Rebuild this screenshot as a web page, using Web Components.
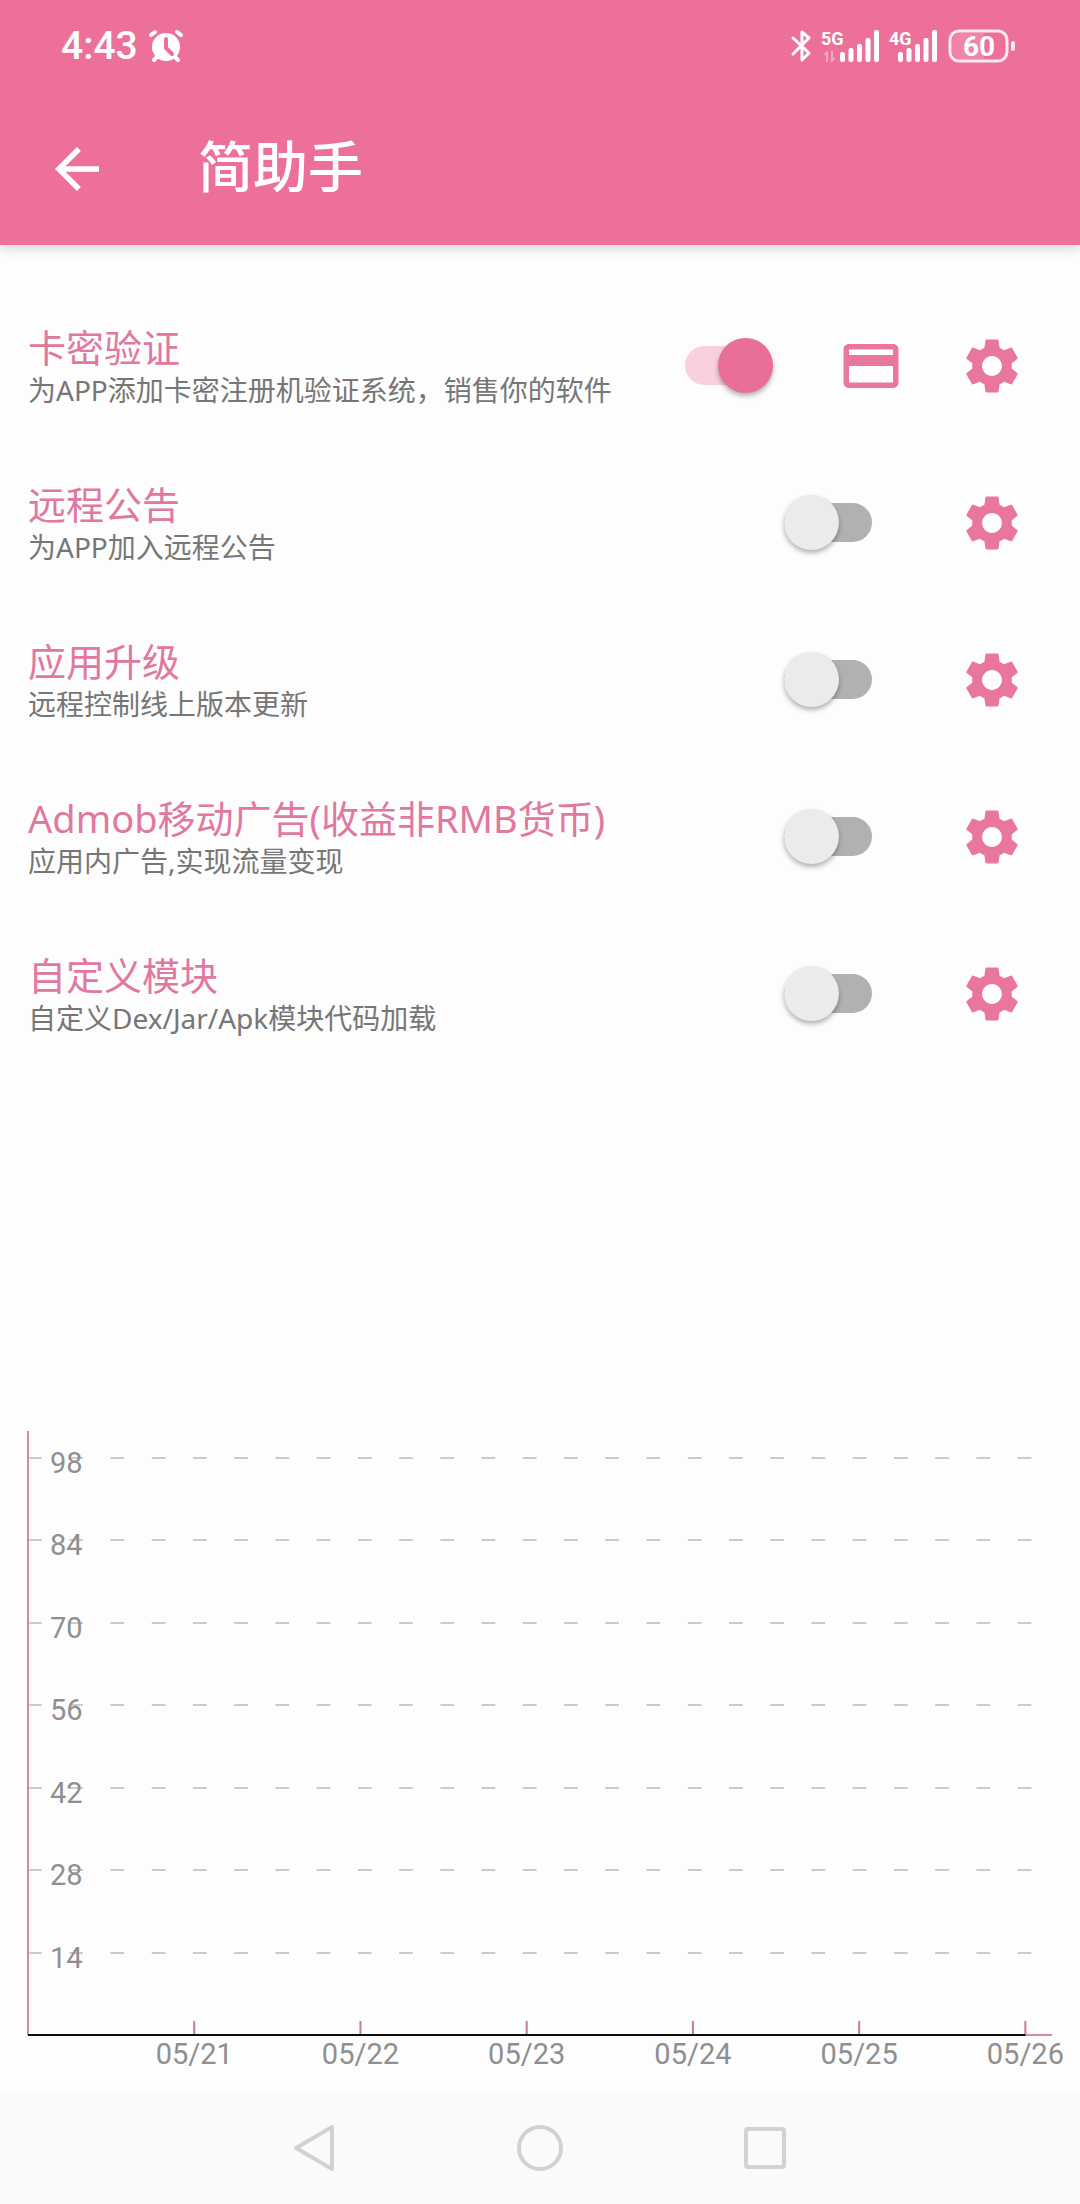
<!DOCTYPE html>
<html lang="zh-CN">
<head>
<meta charset="UTF-8">
<meta name="viewport" content="width=device-width, initial-scale=1">
<title>简助手</title>
<style>
    body {
        margin: 0;
        background-color: #fdfdfd;
        font-family: "Noto Sans", "Noto Sans CJK SC", sans-serif;
    }
</style>
</head>
<body>
<app-screen>
    <status-bar slot="header" time="4:43" battery="60"></status-bar>
    <app-bar slot="header">简助手</app-bar>

    <setting-row name="卡密验证" info="为APP添加卡密注册机验证系统，销售你的软件" checked>
        <icon-button class="card" icon="card" label="卡密"></icon-button>
    </setting-row>
    <setting-row name="远程公告" info="为APP加入远程公告"></setting-row>
    <setting-row name="应用升级" info="远程控制线上版本更新"></setting-row>
    <setting-row name="Admob移动广告(收益非RMB货币)" info="应用内广告,实现流量变现"></setting-row>
    <setting-row name="自定义模块" info="自定义Dex/Jar/Apk模块代码加载"></setting-row>

    <usage-chart slot="chart" values="98,84,70,56,42,28,14" days="05/21,05/22,05/23,05/24,05/25,05/26"></usage-chart>
    <nav-bar slot="footer"></nav-bar>
</app-screen>

<script>
const ICONS = {
    back: `<path d="M20 11H7.83l5.59-5.59L12 4l-8 8 8 8 1.41-1.41L7.83 13H20v-2z"/>`,
    card: `<path d="M20 4H4c-1.11 0-1.99.89-1.99 2L2 18c0 1.11.89 2 2 2h16c1.11 0 2-.89 2-2V6c0-1.11-.89-2-2-2zm0 14H4v-6h16v6zm0-10H4V6h16v2z"/>`,
    gear: `<path d="M19.14 12.94c.04-.3.06-.61.06-.94 0-.32-.02-.64-.07-.94l2.03-1.58c.18-.14.23-.41.12-.61l-1.92-3.32c-.12-.22-.37-.29-.59-.22l-2.39.96c-.5-.38-1.03-.7-1.62-.94L14.4 2.81c-.04-.24-.24-.41-.48-.41h-3.84c-.24 0-.43.17-.47.41L9.25 5.35c-.59.24-1.13.57-1.62.94L5.24 5.33c-.22-.08-.47 0-.59.22L2.74 8.87c-.12.21-.08.47.12.61l2.03 1.58c-.05.3-.09.63-.09.94s.02.64.07.94l-2.03 1.58c-.18.14-.23.41-.12.61l1.92 3.32c.12.22.37.29.59.22l2.39-.96c.5.38 1.03.7 1.62.94l.36 2.54c.05.24.24.41.48.41h3.84c.24 0 .44-.17.47-.41l.36-2.54c.59-.24 1.13-.56 1.62-.94l2.39.96c.22.08.47 0 .59-.22l1.92-3.32c.12-.22.07-.47-.12-.61l-2.01-1.58zM12 15.6c-1.98 0-3.6-1.62-3.6-3.6s1.62-3.6 3.6-3.6 3.6 1.62 3.6 3.6-1.62 3.6-3.6 3.6z"/>`
};

class AppScreen extends HTMLElement {

    constructor() {
        super();
        this.attachShadow({mode: "open"}).innerHTML = `
        <style>
            :host {
                display: flex;
                flex-direction: column;
                min-height: 100vh;
            }
            header {
                background-color: #ed7098;
                color: #fff;
                box-shadow: 0 2px 12px rgba(0, 0, 0, 0.2);
            }
            main {
                flex: 1;
                display: flex;
                flex-direction: column;
                padding: 42px 28px 0;
            }
            .chart {
                margin-top: auto;
            }
        </style>
        <header><slot name="header"></slot></header>
        <main>
            <slot></slot>
            <div class="chart"><slot name="chart"></slot></div>
        </main>
        <slot name="footer"></slot>
        `;
    }
}

class StatusBar extends HTMLElement {

    constructor() {
        super();
        this.shadowDOM = this.attachShadow({mode: "open"});
    }

    connectedCallback() {
        this.render();
    }

    signal(name, width, extra = "") {
        const tops = [22, 18, 14, 8, 0];
        const bars = tops.map((top, i) =>
            `<rect x="${width - 39 + i * 17 / 2}" y="${top}" width="5" height="${32 - top}" rx="2"/>`).join("");
        return `
        <svg width="${width}" height="32" fill="#fff">
            <text x="-1" y="15">${name}</text>${bars}${extra}
        </svg>`;
    }

    render() {
        const arrows = `<path opacity=".4" d="M4 32V25H1l4-4h1v11zM9 21h2v7h3l-4 4H9z"/>`;
        this.shadowDOM.innerHTML = `
        <style>
            :host {
                display: flex;
                align-items: center;
                gap: 11px;
                height: 92px;
                padding: 0 65px 0 61px;
                font-family: Roboto, sans-serif;
            }
            time {
                font-size: 39px;
                font-weight: 500;
                line-height: 48px;
            }
            .fill {
                flex: 1;
            }
            svg {
                overflow: visible;
            }
            svg text {
                font-size: 18px;
                font-weight: 700;
            }
            svg .level {
                font-size: 28px;
            }
        </style>
        <time>${this.getAttribute("time")}</time>
        <svg width="34" height="32" fill="none" stroke="#fff" stroke-width="4" stroke-linecap="round">
            <circle cx="17" cy="17" r="14" fill="#fff" stroke="none"/>
            <path d="M2 5l4-3M32 5l-4-3M9 26l-4 4M25 26l4 4"/>
            <path stroke="#ed7098" d="M17 9v9l6 6"/>
        </svg>
        <span class="fill"></span>
        <svg width="20" height="32" fill="none" stroke="#fff" stroke-width="3" stroke-linecap="round" stroke-linejoin="round">
            <path d="M2 8l16 15-7 7V2l7 6L2 24"/>
        </svg>
        ${this.signal("5G", 57, arrows)}
        ${this.signal("4G", 47)}
        <svg width="67" height="34" fill="#fff">
            <path fill-opacity=".15" d="M12 4h24v26H12a8 8 0 0 1-8-8V12a8 8 0 0 1 8-8z"/>
            <rect x="2" y="2" width="57" height="30" rx="9" fill="none" stroke="#fff" stroke-opacity=".85" stroke-width="3"/>
            <rect x="63" y="12" width="4" height="10" rx="2" fill-opacity=".85"/>
            <text class="level" x="31" y="27" text-anchor="middle">${this.getAttribute("battery")}</text>
        </svg>
        `;
    }
}

class AppBar extends HTMLElement {

    constructor() {
        super();
        this.attachShadow({mode: "open"}).innerHTML = `
        <style>
            :host {
                display: flex;
                align-items: center;
                gap: 88px;
                height: 153px;
                padding: 0 44px;
            }
            h1 {
                margin: 0;
                padding-bottom: 6px;
                font-size: 55px;
                font-weight: 500;
                line-height: 64px;
            }
        </style>
        <icon-button icon="back" label="返回"></icon-button>
        <h1><slot></slot></h1>
        `;
    }
}

class IconButton extends HTMLElement {

    constructor() {
        super();
        this.shadowDOM = this.attachShadow({mode: "open"});
    }

    connectedCallback() {
        this.shadowDOM.innerHTML = `
        <style>
            :host {
                display: flex;
                justify-content: center;
            }
            button {
                display: flex;
                padding: 0;
                border: 0;
                background: none;
                color: inherit;
                cursor: pointer;
            }
            svg {
                width: 66px;
                height: 66px;
                fill: currentColor;
            }
        </style>
        <button type="button" aria-label="${this.getAttribute("label")}">
            <svg viewBox="0 0 24 24">${ICONS[this.getAttribute("icon")]}</svg>
        </button>
        `;
    }
}

class SettingRow extends HTMLElement {

    constructor() {
        super();
        this.shadowDOM = this.attachShadow({mode: "open"});
    }

    connectedCallback() {
        this.render();
    }

    render() {
        this.shadowDOM.innerHTML = `
        <style>
            :host {
                display: flex;
                align-items: center;
                height: 157px;
                color: #e9769d;
            }
            .text {
                flex: 1;
                padding-top: 4px;
            }
            label {
                display: block;
                font-size: 38px;
                line-height: 44px;
                color: #e0789f;
            }
            p {
                margin: 0;
                font-size: 28px;
                line-height: 42px;
                color: #767676;
            }
            input {
                appearance: none;
                display: grid;
                align-items: center;
                width: 88px;
                height: 55px;
                margin: 0 59px 0 0;
                cursor: pointer;
            }
            input::before, input::after {
                content: "";
                grid-area: 1 / 1;
            }
            input::before {
                height: 39px;
                border-radius: 20px;
                background-color: #b1b1b1;
            }
            input::after {
                width: 55px;
                height: 55px;
                border-radius: 50%;
                background-color: #ebebeb;
                box-shadow: 0 3px 5px rgba(0, 0, 0, 0.3);
            }
            input:checked::before {
                background-color: #f9d0de;
            }
            input:checked::after {
                justify-self: end;
                background-color: #e96f97;
            }
            ::slotted(icon-button) {
                width: 77px;
                margin-right: 22px;
            }
            .settings {
                width: 121px;
            }
        </style>
        <div class="text">
            <label for="toggle">${this.getAttribute("name")}</label>
            <p>${this.getAttribute("info")}</p>
        </div>
        <input type="checkbox" role="switch" id="toggle" ${this.hasAttribute("checked") ? "checked" : ""}>
        <slot></slot>
        <icon-button class="settings" icon="gear" label="设置"></icon-button>
        `;
    }
}

class UsageChart extends HTMLElement {

    constructor() {
        super();
        this.shadowDOM = this.attachShadow({mode: "open"});
    }

    connectedCallback() {
        this.render();
    }

    render() {
        const values = this.getAttribute("values").split(",");
        const days = this.getAttribute("days").split(",");
        const top = 27;
        const base = 604;
        // the data part of the x axis; the rest is the axis overhang
        const span = 97.4;

        const rows = values.map((value, i) => {
            const y = Math.round(top + i * (base - top) / values.length);
            return `
            <line class="grid" x1="0" y1="${y}" x2="100%" y2="${y}" pathLength="149"/>
            <text x="22" y="${y + 15}">${value}</text>`;
        }).join("");

        const columns = days.map((day, i) => {
            const x = (i + 1) * span / days.length + "%";
            return `
            <line class="tick" x1="${x}" y1="${base - 14}" x2="${x}" y2="${base}"/>
            <text x="${x}" y="${base + 29}" text-anchor="middle">${day}</text>`;
        }).join("");

        this.shadowDOM.innerHTML = `
        <style>
            :host {
                display: block;
            }
            svg {
                display: block;
                width: 100%;
                height: 661px;
                overflow: visible;
            }
            line {
                stroke: #d58ba8;
                stroke-width: 2px;
            }
            .grid {
                stroke: #cbcbcb;
                stroke-dasharray: 2 4;
            }
            .tick {
                stroke: #cc7b84;
            }
            .base {
                stroke: #0c0c10;
            }
            text {
                font-family: Roboto, sans-serif;
                font-size: 29px;
                fill: #8f8f8f;
            }
        </style>
        <svg>
            ${rows}
            <line x1="0" y1="0" x2="0" y2="${base}"/>
            <line x1="0" y1="${base}" x2="100%" y2="${base}"/>
            ${columns}
            <line class="base" x1="0" y1="${base}" x2="${span}%" y2="${base}"/>
        </svg>
        `;
    }
}

class NavBar extends HTMLElement {

    constructor() {
        super();
        this.attachShadow({mode: "open"}).innerHTML = `
        <style>
            :host {
                display: grid;
                grid-template-columns: repeat(3, 225px);
                justify-content: center;
                height: 112px;
                background-color: #fafafa;
            }
            button {
                display: flex;
                align-items: center;
                justify-content: center;
                padding: 0;
                border: 0;
                background: none;
            }
            svg {
                width: 48px;
                height: 48px;
                fill: none;
                stroke: #d2d2d2;
                stroke-width: 4px;
                stroke-linejoin: round;
            }
        </style>
        <button type="button" aria-label="返回"><svg><path d="M41 3v42L5 24z"/></svg></button>
        <button type="button" aria-label="主页"><svg><circle cx="24" cy="24" r="21"/></svg></button>
        <button type="button" aria-label="最近任务"><svg><rect x="5" y="5" width="38" height="38" rx="2"/></svg></button>
        `;
    }
}

customElements.define("app-screen", AppScreen);
customElements.define("status-bar", StatusBar);
customElements.define("app-bar", AppBar);
customElements.define("icon-button", IconButton);
customElements.define("setting-row", SettingRow);
customElements.define("usage-chart", UsageChart);
customElements.define("nav-bar", NavBar);
</script>
</body>
</html>
